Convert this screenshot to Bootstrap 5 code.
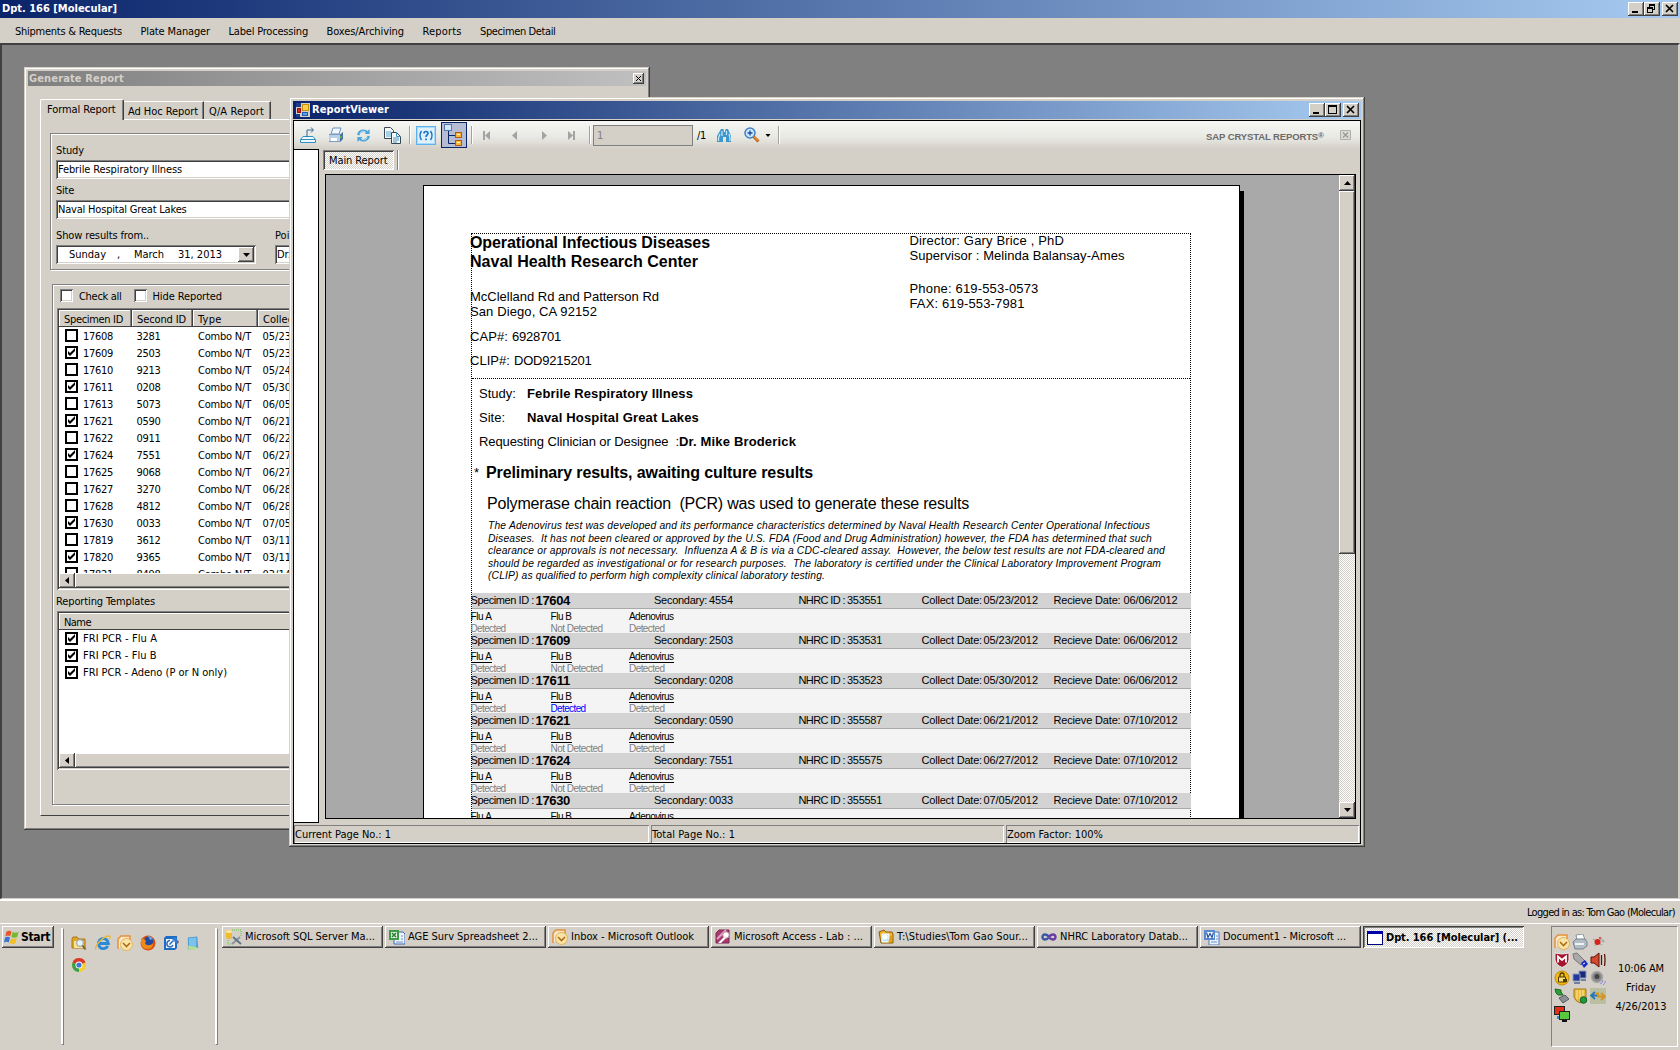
<!DOCTYPE html>
<html lang="en">
<head>
<meta charset="utf-8">
<title>Dpt. 166 [Molecular]</title>
<link href="https://cdn.jsdelivr.net/npm/bootstrap@5.3.0/dist/css/bootstrap.min.css" rel="stylesheet">
<style>
:root{--face:#d4d0c8;--dk:#404040;--sh:#808080}
*{border-radius:0}
body{width:1680px;height:1050px;overflow:hidden;background:var(--face);color:#000;font:11px/16px "DejaVu Sans Condensed","DejaVu Sans",sans-serif;font-stretch:condensed}
[data-w]{display:inline-block;white-space:pre;flex:none}
svg{display:block;flex:none;overflow:visible}
.raised{background:var(--face);box-shadow:inset -1px -1px var(--dk),inset 1px 1px #fff,inset -2px -2px var(--sh)}
.sunk{background:#fff;box-shadow:inset 1px 1px var(--sh),inset -1px -1px #fff,inset 2px 2px var(--dk),inset -2px -2px var(--face)}
.frame-win{background:var(--face);padding:4px;box-shadow:inset -1px -1px var(--dk),inset 1px 1px var(--face),inset -2px -2px var(--sh),inset 2px 2px #fff}
.dither{background:repeating-conic-gradient(#fff 0 25%,#d4d0c8 0 50%) 0 0/2px 2px}
.caption-bar{background:linear-gradient(90deg,#0a246a,#a6caf0);color:#fff;font-weight:700;height:18px;line-height:18px}
.capbtn{width:16px;height:14px}
.main-menu{height:25px;padding:2px 0 0 15px;gap:18.500px}
.mdi{height:856px;background:#808080;border-style:solid;border-width:2px 2px 1px 2px;border-color:#404040 var(--face) var(--face) #404040}
.gen-win{left:22px;top:22px;width:626px;height:763px}
.gen-cap{height:15px;background:linear-gradient(90deg,#808080,#c0c0c0);color:var(--face)}
.tabstrip{height:20px;margin:13px 0 0 12px}
.sheet-tab{height:18px;border-top:1px solid #fff;border-right:1px solid var(--dk);box-shadow:inset -1px 0 var(--sh);padding-left:4px;line-height:20px}
.sheet-tab.on{height:21px;border-left:1px solid #fff;border-radius:2px 2px 0 0;background:var(--face);padding-left:6px;line-height:20px;z-index:1}
.pane{margin-left:12px;width:597px;height:697px;border:1px solid;border-color:#fff var(--dk) var(--dk) #fff;padding:13px 9px}
.group{border:1px solid var(--sh);box-shadow:1px 1px #fff,inset 1px 1px #fff}
.g1{height:137px;padding:8px 5px 0}
.g2{height:521px;margin:14px 0 0 2px;padding:4px 4px 0}
.lab{height:16px;line-height:18px}
.field{height:19px;padding-left:2px;line-height:19px}
.cbx{width:13px;height:13px}
.listcbx{width:13px;height:13px;border:2px solid #000;background:#fff;flex:none}
.lv{padding:2px}
.lvhead{height:17px;background:var(--face);border-bottom:1px solid var(--dk)}
.lvhead div{height:16px;line-height:19px;padding-left:5px;box-shadow:inset -1px 0 var(--dk),inset -2px 0 var(--sh),inset 1px 1px #fff}
.lvrows{overflow:hidden}
.lvrow{height:17px;line-height:17px;padding-left:6px}
#specimens .lvrow>span{padding-top:1.500px}
.hs{height:15px;background:var(--face)}
.rv-win{left:287px;top:52px;width:1076px;height:750px}
.rv-body{height:724px;margin-top:1px;border:1px solid #000}
.rv-tools{height:28px;background:linear-gradient(#f6f6f4,#e8e8e3 60%,#d4d0c8)}
.rv-tools .sep{width:2px;height:18px;background:linear-gradient(90deg,#a5a29a 50%,#fff 50%)}
.treebtn{width:26px;height:26px;border:1px solid #0a246a;background:#b6bdd2}
.sap{font:700 9px/16px "Liberation Sans",sans-serif;color:#6b6b6b}
.rv-left{width:25px;height:674px;background:#fff;border:1px solid #000;border-left:0}
.rv-tab{width:71px;height:20px;box-shadow:inset 1px 1px var(--sh),inset -1px -1px #fff,inset 2px 2px var(--dk);line-height:22px;padding-left:6px}
.rv-area{width:1031px;height:645px;border:1px solid #000;background:#a9a9a9;margin-left:6px;overflow:hidden}
.paper{width:817px;height:900px;margin:10px 0 0 97px;border:1px solid #000;background:#fff;box-shadow:4px 6px #000;padding:47px 0 0 47px;font-family:"Liberation Sans",sans-serif;font-stretch:normal}
.repbox{width:720px;height:840px;border:1px dotted #000}
.sec1{height:144px}
.tl{margin-left:-2px;font-size:13px;line-height:15px;height:15px}
.tb{font-size:16px;font-weight:700}
.fine{font-size:10.3px;font-style:italic;line-height:12.6px;height:12.6px}
.band{display:grid;grid-template-columns:65px 118.5px 55px 89.5px 48.5px 74.5px 62px 70px 70px 60px;width:719px;height:16px;background:#d3d3d3;border-bottom:1px solid #a9a9a9;font-size:11px;line-height:15px}
.band>span,.res>span{margin-left:-1.500px}
.res{display:grid;grid-template-columns:80px 78.5px 100px;grid-template-rows:12px 11px;width:718px;height:24px;background:#f4f4f4;font-size:10px;line-height:12px;padding-top:2px}
.res .nm{height:11px;line-height:12px}
.ul .nm>span{border-bottom:1px solid #000;height:12px}
.rv-vs{width:16px}
.pnl{height:18px;box-shadow:inset 1px 1px var(--sh),inset -1px -1px #fff;line-height:19px;padding-left:1px}
.statusline{height:24px;border-top:2px solid #fff;line-height:24px;padding-right:5px}
.taskbar-xp{height:127px;border-top:1px solid #fff;padding-top:2px}
.tbtn{width:161px;height:22px;line-height:22px;padding-left:4px}
.tbtn.on{padding-top:2px;box-shadow:inset 1px 1px #404040,inset -1px -1px #fff,inset 2px 2px #808080}
.vsep{width:3px;height:117px;margin-top:2px;border:1px solid;border-color:#fff #808080 #808080 #fff;background:#fff}
.tray{width:127px;height:121px;border:1px solid;border-color:#808080 #fff #fff #808080}
.trayicons{display:grid;grid-template-columns:18px 18px 16px;grid-auto-rows:18px}
.ql{display:grid;grid-template-columns:24px 22px 23px 23px 23px 20px;grid-auto-rows:22px}
</style>
</head>
<body class="d-flex flex-column">
<svg width="0" height="0" class="position-absolute">
<defs>
<symbol id="i-folder" viewBox="0 0 16 16"><path d="M1 4l1-2h4l2 2h6v9H1z" fill="#e2a526" stroke="#a87a18"/><path d="M3 6h10v7H3z" fill="#fbe28e"/><circle cx="9" cy="8" r="3.4" fill="#e4f3fb" stroke="#8b9aa6"/><path d="M11.5 10.5l3 4" stroke="#7a6438" stroke-width="2"/></symbol>
<symbol id="i-folder2" viewBox="0 0 16 16"><path d="M1 3l5-2 2 2h6l1 2v9H3z" fill="#f0b429" stroke="#8a5c08"/><path d="M4 5h7v8H4z" fill="#bfe9fb" stroke="#fff"/><circle cx="7" cy="8" r="2.5" fill="#fff"/><path d="M12 7l3 0-2 7-3 0z" fill="#d9960c" opacity=".7"/></symbol>
<symbol id="i-ie" viewBox="0 0 16 16"><path d="M12.8 11A5 5 0 1 1 13.4 8.500H5" fill="none" stroke="#2a8ad8" stroke-width="2.9"/><path d="M1 14.500C-1 11 8 1 14.500 1c1 .5 .5 2-.3 3" fill="none" stroke="#e9b93a" stroke-width="1.500"/></symbol>
<symbol id="i-outlook" viewBox="0 0 16 16"><path d="M1 14V4l3-3h9v4" fill="#fbe6c8" stroke="#e5913a" stroke-width="1.500"/><circle cx="9.500" cy="9.500" r="6" fill="#fbe3a6" stroke="#e0b25a"/><path d="M6 8l3.500 3.500L13 8" fill="none" stroke="#a9701c" stroke-width="1.600"/></symbol>
<symbol id="i-ff" viewBox="0 0 16 16"><circle cx="8" cy="8" r="7.500" fill="#d9500f"/><circle cx="8.500" cy="6.500" r="4.800" fill="#234a9e"/><path d="M8 1c2 0 4 1 5 3l-3 1z" fill="#5fa6e0"/><path d="M1 3c1 1 2 1 3 1l2 2-1 2c1 3 6 3 8 0 0 5-3 6-6 6-4 0-6-4-6-6z" fill="#ef8a1b"/></symbol>
<symbol id="i-sync" viewBox="0 0 16 16"><path d="M1 3l2-2h11v12l-2 2H1z" fill="#1f6cc4"/><path d="M3 4h9v9H3z" fill="#f2f9ff"/><path d="M7 5.500A3.200 3.200 0 1 0 10 10M6.500 9.500l4-4" fill="none" stroke="#2c6cb8" stroke-width="1.500"/><path d="M9 4l3-2 4 5-2 2z" fill="#2f7fd6"/><path d="M14 5l2 2-2 2z" fill="#c2502a"/></symbol>
<symbol id="i-note" viewBox="0 0 16 16"><path d="M2 2l10-1 1 12-11 2z" fill="#4c9bd4"/><path d="M3 3l8-1v10H3z" fill="#7cc3ea"/><path d="M2 11l8 1 4 2-11 2z" fill="#b8dd96"/></symbol>
<symbol id="i-chrome" viewBox="0 0 16 16"><circle cx="8" cy="8" r="7" fill="#f7cf2d"/><path d="M8 8L1.500 5.500A7 7 0 0 1 14.500 5.500z" fill="#d93a2b"/><path d="M8 8L1.500 5.500A7 7 0 0 0 8 15z" fill="#38a14a"/><circle cx="8" cy="8" r="3.500" fill="#fff"/><circle cx="8" cy="8" r="2.600" fill="#3f78d0"/></symbol>
<symbol id="i-sql" viewBox="0 0 16 16"><path d="M6 1h9v7M2 11v4h4" fill="none" stroke="#66c24a" stroke-dasharray="1 1"/><rect x="0" y="1" width="6" height="9" rx="2" fill="#eebb33"/><ellipse cx="3" cy="2.500" rx="3" ry="1.500" fill="#fbe79a"/><path d="M6 15l8-7" stroke="#8a949f" stroke-width="2"/><path d="M7 8l8 7" stroke="#5b7288" stroke-width="1.800"/></symbol>
<symbol id="i-xl" viewBox="0 0 16 16"><path d="M5 3h9l2 2v10H5z" fill="#eef5fb" stroke="#3f67b0"/><rect x="0" y="1" width="10" height="10" fill="#3d9a45"/><rect x="2" y="3" width="6" height="6" fill="#e9f5e6"/><path d="M3 4l4 4M7 4L3 8" stroke="#2a7d34" stroke-width="1.500"/><path d="M7 13h7M12 7h2M12 10h2" stroke="#6d8fca"/></symbol>
<symbol id="i-acc" viewBox="0 0 16 16"><path d="M1 14V4l3-3h10v13z" fill="#a8396d" stroke="#7c2550"/><path d="M2 10l9-9" stroke="#e2a6c2" stroke-width="2"/><circle cx="11" cy="6" r="3.300" fill="#fff" stroke="#b77f9c"/><path d="M9 8l-6 6h3l5-5z" fill="#fff"/></symbol>
<symbol id="i-vs" viewBox="0 0 16 16"><path d="M8 8C6 5 1.500 4.500 1.500 8S6 11 8 8" fill="none" stroke="#3b56a8" stroke-width="2.400"/><path d="M8 8c2-3 6.500-3.500 6.500 0S10 11 8 8" fill="none" stroke="#6a3ba0" stroke-width="2.400"/></symbol>
<symbol id="i-word" viewBox="0 0 16 16"><path d="M5 3h10v13H5z" fill="#eaf2fc" stroke="#4d79c4"/><rect x="0" y="1" width="11" height="10" fill="#5c8ad2"/><rect x="2" y="3" width="8" height="6" fill="#f2f7fd"/><path d="M2.500 3.500l1.500 5L6 4.500 8 8.500 9.500 3.500" fill="none" stroke="#24509c" stroke-width="1.200"/><path d="M7 13h6M12 7h2M12 10h2" stroke="#6d8fca"/></symbol>
<symbol id="i-win" viewBox="0 0 16 14"><rect x=".5" y=".5" width="15" height="13" fill="#fff" stroke="#00007c"/><path d="M0 1.500h16" stroke="#0000a8" stroke-width="3"/></symbol>
<symbol id="i-flag" viewBox="0 0 16 16"><path d="M2.500 2.500c2-1.200 3.600-1 5 0L6.300 7.300c-1.500-1-3-1-5 0z" fill="#e8542b"/><path d="M8.600 3c2 1 3.700 1 6-.2L13.200 8c-2 1-4 1-5.800 0z" fill="#74b82c"/><path d="M1 8.500c2-1 3.500-1 5 0L4.800 13.500c-1.500-1-3-1-4.800 0z" fill="#3b74d8"/><path d="M7 9.200c2 1 3.800 1 5.800 0l-1.300 5c-2 1-3.800 1-5.800 0z" fill="#f4bf23"/></symbol>
<symbol id="i-form" viewBox="0 0 14 14"><rect width="14" height="14" fill="#d4d0c8"/><path d="M0 0h5v4H0zM0 11h4v3H0z" fill="#1c3c8c"/><rect x="1.500" y="5.500" width="3" height="4" fill="#d22" stroke="#911"/><rect x="6.500" y="1.500" width="6" height="6" fill="#fbd04a" stroke="#c8920f"/><rect x="6.500" y="9.500" width="5" height="3" fill="#5aa0ea" stroke="#1d5cae"/></symbol>
<symbol id="i-export" viewBox="0 0 16 16"><path d="M3 9.500h10l2.500 3v3h-15v-3z" fill="#eef8fd" stroke="#2d8fc4"/><path d="M1 12.500h14" stroke="#2d8fc4"/><path d="M7 10V3h6M11 .5L13.500 3 11 5.500" fill="none" stroke="#33698c"/></symbol>
<symbol id="i-print" viewBox="0 0 16 16"><path d="M5 1h8l-2 6H3z" fill="#f2f8fd" stroke="#6795bd"/><path d="M1 7h12l2-2v6l-3 4H1z" fill="#7d9cbf"/><path d="M1 8h11v6H1z" fill="#b9d0e6"/><path d="M3 11h6v3H3z" fill="#fff"/><path d="M12 8l3-3v7l-3 3z" fill="#48719d"/><path d="M12 9h2v2h-2z" fill="#53b447"/></symbol>
<symbol id="i-refresh" viewBox="0 0 16 16"><path d="M2.500 7.500A5.500 5 0 0 1 12 4.500M13.500 8.500A5.500 5 0 0 1 4 11.500" fill="none" stroke="#4aa5d8" stroke-width="2.600"/><path d="M9 6.500h5.500V1zM7 9.500H1.500V15z" fill="#4aa5d8"/><path d="M4 6a4.500 4 0 0 1 6-2M12 10a4.500 4 0 0 1-6 2" fill="none" stroke="#bfe4f5"/></symbol>
<symbol id="i-copy" viewBox="0 0 17 17"><path d="M.5.5h6l3 3v8h-9z" fill="#f3f8fb" stroke="#3a4650"/><path d="M2 5h5M2 7h5M2 9h5" stroke="#58a7d0"/><path d="M7.500 5.500h5l4 4v7h-9z" fill="#f3f8fb" stroke="#3a4650"/><path d="M12.500 5.500v4h4M9 11h6M9 13h6M9 15h4" fill="none" stroke="#4a93bd"/></symbol>
<symbol id="i-help" viewBox="0 0 20 19"><rect x=".5" y=".5" width="19" height="18" fill="#dff1fd" stroke="#5db2ee"/><rect x="1.500" y="1.500" width="17" height="16" fill="none" stroke="#a9dafa"/><path d="M5.500 5q-3 4.500 0 9M14.500 5q3 4.500 0 9" fill="none" stroke="#1c74c8" stroke-width="1.500"/><path d="M8 7.500q0-2 2-2t2 1.800q0 1-1 1.700-1 .7-1 2" fill="none" stroke="#1c74c8" stroke-width="1.700"/><path d="M9.200 12.500h1.700v1.700H9.200z" fill="#1c74c8"/></symbol>
<symbol id="i-tree" viewBox="0 0 22 22"><path d="M5.500 7v12.500h7M5.500 11.500h7" fill="none" stroke="#0a246a"/><rect x="1.500" y=".5" width="7" height="6" fill="#d5e8fb" stroke="#5577b0"/><rect x="12.500" y="8.500" width="6" height="5" fill="#f8b63a" stroke="#b05a10"/><rect x="12.500" y="16.500" width="6" height="5" fill="#f8b63a" stroke="#b05a10"/><path d="M14 10.500h3M14 18.500h3" stroke="#fff3c8"/></symbol>
<symbol id="i-bino" viewBox="0 0 15 13"><path d="M4 0h2.500l.5 3h1l.500-3H11l3 7v6H9V8H6v5H0V7z" fill="#3f97cf"/><path d="M3 5L1.500 9v3M5 2v5M12 5l1 4v3M9.500 2v4" fill="none" stroke="#c8e9f8" stroke-width="1.200"/></symbol>
<symbol id="i-mag" viewBox="0 0 16 16"><circle cx="6" cy="6" r="5" fill="#cfe8fb" stroke="#3d80cc" stroke-width="1.500"/><path d="M6 3.500v5M3.500 6h5" stroke="#1c4da0" stroke-width="1.400"/><path d="M9.500 9.500l5 5" stroke="#c4661a" stroke-width="3"/><path d="M10 9.500l4 4" stroke="#f8b55a"/></symbol>
<symbol id="i-check" viewBox="0 0 9 9"><path d="M1 3v3l2 2 5-5V0L3 5z" fill="#000"/></symbol>
<symbol id="i-tprint" viewBox="0 0 16 16"><path d="M4 1l7-1 2 6H5z" fill="#fff" stroke="#8a95a0"/><path d="M1 8l3-3h9l2 3v4l-4 3H3z" fill="#b4bdc6" stroke="#77818b"/><path d="M3 10h9" stroke="#eef2f5" stroke-width="2"/></symbol>
<symbol id="i-red" viewBox="0 0 16 16"><path d="M3 5l9 6M12 4L5 12" stroke="#999" stroke-width="1"/><circle cx="7.500" cy="8" r="3" fill="#d8241c"/><circle cx="13" cy="7" r="1.500" fill="#aaa"/><circle cx="10" cy="4" r="1.300" fill="#c66"/></symbol>
<symbol id="i-mc" viewBox="0 0 16 16"><path d="M1 1q7 2 14 0v7q-1 5-7 7.500Q2 13 1 8z" fill="#a8142c" stroke="#e8e8e8"/><path d="M4 10.500V4.500l4 3.500 4-3.500v6" fill="none" stroke="#fff" stroke-width="1.800"/></symbol>
<symbol id="i-usb" viewBox="0 0 16 16"><path d="M1 2l4-1 8 8-4 4-7-6z" fill="#a9a9a9" stroke="#777"/><path d="M9 11l4-3 3 4-4 4z" fill="#1a28c8"/><path d="M11 12l2-1" stroke="#fff"/></symbol>
<symbol id="i-spk" viewBox="0 0 16 16"><path d="M1 5h3l5-4v14l-5-4H1z" fill="#d44a2c" stroke="#5c1408"/><path d="M11.500 3v10M14.500 2q1 6 0 12" fill="none" stroke="#5c1408" stroke-width="1.300"/></symbol>
<symbol id="i-lock" viewBox="0 0 16 16"><circle cx="8" cy="8" r="7" fill="#f2b90f" stroke="#c48a08"/><path d="M6 7V5q0-2 2-2t2 2v2" fill="none" stroke="#4c3a08" stroke-width="1.300"/><path d="M4.500 7h7v5h-7z" fill="#f8e07a" stroke="#4c3a08"/><path d="M9 9h4v3H9z" fill="#4c3a08"/></symbol>
<symbol id="i-net" viewBox="0 0 16 16"><path d="M7 1h7v7H7z" fill="#1b2a78" stroke="#8d99bd"/><path d="M1 4h7v7H1z" fill="#22389a" stroke="#8d99bd"/><path d="M2 13h6M9 10h5" stroke="#75809a" stroke-width="2"/></symbol>
<symbol id="i-vol" viewBox="0 0 16 16"><circle cx="7" cy="7" r="5.500" fill="#888" stroke="#aaa" stroke-width="1.500"/><circle cx="7" cy="6.500" r="2.500" fill="#444"/><path d="M10 14q3-1 3-4M13 15q2-1 2.500-4" fill="none" stroke="#8a8ad8"/></symbol>
<symbol id="i-eject" viewBox="0 0 16 16"><path d="M5 10l6-3 4 4-6 4z" fill="#8b9096" stroke="#555b60"/><path d="M1 1l6 1v2l2 3H4L2 5z" fill="#2f9e3a" stroke="#186a22"/></symbol>
<symbol id="i-shield" viewBox="0 0 16 16"><path d="M2 1h12v8q-1 4-6 6-5-2-6-6z" fill="#e9b83a" stroke="#a9791a"/><path d="M5 2v9M8 2v11M11 2v8" stroke="#fbeaa8"/><circle cx="11.500" cy="12" r="3.300" fill="#1f9a3c" stroke="#0f5c22"/></symbol>
<symbol id="i-arrows" viewBox="0 0 16 16"><rect width="16" height="16" fill="#b9bfa0"/><path d="M5 4L1 7.500 5 11M1 7.500h7" fill="none" stroke="#2178b8" stroke-width="1.800"/><path d="M11 5l4 3.500-4 3.500M15 8.500H8V5.500H6" fill="none" stroke="#d9931a" stroke-width="1.800"/></symbol>
<symbol id="i-mon" viewBox="0 0 16 16"><rect x=".5" y=".5" width="10" height="8" fill="#e0301c" stroke="#222"/><path d="M3 10h4v3H3z" fill="#3a8ad0"/><rect x="5.500" y="5.500" width="10" height="8" fill="#58c93c" stroke="#222"/><path d="M8 15h5" stroke="#111" stroke-width="2"/></symbol>
<symbol id="i-left" viewBox="0 0 4 7"><path d="M4 0v7L0 3.500z"/></symbol>
<symbol id="i-up" viewBox="0 0 7 4"><path d="M0 4h7L3.500 0z"/></symbol>
<symbol id="i-down" viewBox="0 0 7 4"><path d="M0 0h7L3.500 4z"/></symbol>
<symbol id="b-min" viewBox="0 0 16 14"><path d="M4 9h6v2H4z"/></symbol>
<symbol id="b-max" viewBox="0 0 16 14"><path d="M3 2h9v9H3zM4 4v6h7V4z" fill-rule="evenodd"/></symbol>
<symbol id="b-res" viewBox="0 0 16 14"><path d="M5 2h6v6H9v3H3V5h2zM6 4v1h3v2h1V4zM4 7v3h4V7z" fill-rule="evenodd"/></symbol>
<symbol id="b-x" viewBox="0 0 16 14"><path d="M4 3l7 7M11 3l-7 7" stroke="#000" stroke-width="1.700"/></symbol>
</defs>
</svg>

<header>
  <div class="caption-bar d-flex align-items-center justify-content-between">
    <span style="margin-left:2px" data-w="115">Dpt. 166 [Molecular]</span>
    <div class="d-flex" style="margin-right:2px">
      <svg class="capbtn raised"><use href="#b-min"/></svg><svg class="capbtn raised"><use href="#b-res"/></svg><svg class="capbtn raised" style="margin-left:2px"><use href="#b-x"/></svg>
    </div>
  </div>
  <nav class="main-menu d-flex align-items-center">
    <span data-w="107">Shipments &amp; Requests</span><span data-w="69.500">Plate Manager</span><span data-w="79.500">Label Processing</span><span data-w="77.500">Boxes/Archiving</span><span data-w="39">Reports</span><span data-w="75.500">Specimen Detail</span>
  </nav>
</header>

<main class="mdi position-relative overflow-hidden">
  <section class="gen-win frame-win position-absolute">
    <div class="gen-cap d-flex align-items-center justify-content-between fw-bold">
      <span style="margin:1px 0 0 1px" data-w="95">Generate Report</span>
      <svg class="raised" width="11" height="11" style="margin-right:2px"><path d="M3 3l5 5M8 3L3 8" stroke="#000"/></svg>
    </div>
    <div class="tabstrip d-flex align-items-end">
      <div class="sheet-tab on position-relative" style="width:84px;margin-bottom:-1px"><span data-w="68.500">Formal Report</span></div>
      <div class="sheet-tab" style="width:80px"><span data-w="70">Ad Hoc Report</span></div>
      <div class="sheet-tab" style="width:67px;padding-left:5px"><span data-w="55">Q/A Report</span></div>
    </div>
    <div class="pane">
      <div class="group g1">
        <div class="lab"><span data-w="28">Study</span></div>
        <div class="field sunk" style="margin-top:2px"><span data-w="124">Febrile Respiratory Illness</span></div>
        <div class="lab" style="margin-top:3px"><span data-w="18">Site</span></div>
        <div class="field sunk" style="margin-top:2px"><span data-w="128.500">Naval Hospital Great Lakes</span></div>
        <div class="lab d-flex" style="margin-top:8px"><span style="margin-right:126px" data-w="93">Show results from..</span><span>Point of Contact</span></div>
        <div class="d-flex" style="margin-top:2px">
          <div class="field sunk d-flex" style="width:200px;padding-left:13px"><span style="width:48px"><span data-w="37">Sunday</span></span><span style="width:17px">,</span><span style="width:44px"><span data-w="30">March</span></span><span data-w="44">31, 2013</span>
            <div class="raised ms-auto d-flex align-items-center justify-content-center" style="width:16px;height:15px;margin:2px 2px 0 0"><svg width="7" height="4"><use href="#i-down"/></svg></div></div>
          <div class="field sunk flex-fill" style="margin-left:19px">Dr. Mike Broderick</div>
        </div>
      </div>
      <div class="group g2">
        <div class="d-flex align-items-center" style="height:13px;padding-left:3px">
          <div class="cbx sunk"></div><span style="margin:3px 12px 0 6px" data-w="42.500">Check all</span>
          <div class="cbx sunk"></div><span style="margin:3px 0 0 6px" data-w="69.500">Hide Reported</span>
        </div>
        <div class="lv sunk" style="margin-top:6px;height:282px">
          <div class="lvhead d-flex"><div style="width:73px"><span data-w="59">Specimen ID</span></div><div style="width:61px"><span data-w="49">Second ID</span></div><div style="width:65px"><span data-w="23.500">Type</span></div><div class="flex-fill"><span data-w="61">Collect Date</span></div></div>
          <div class="lvrows" id="specimens" style="height:246px"></div>
          <div class="hs d-flex"><div class="raised d-flex align-items-center justify-content-center" style="width:16px"><svg width="4" height="7"><use href="#i-left"/></svg></div><div class="raised" style="width:400px"></div></div>
        </div>
        <div class="lab" style="margin:3px 0 0 -1px"><span data-w="99">Reporting Templates</span></div>
        <div class="lv sunk" style="margin-top:2px;height:159px">
          <div class="lvhead"><div><span data-w="27">Name</span></div></div>
          <div class="lvrows" id="templates" style="height:123px"></div>
          <div class="hs d-flex"><div class="raised d-flex align-items-center justify-content-center" style="width:16px"><svg width="4" height="7"><use href="#i-left"/></svg></div><div class="raised" style="width:400px"></div></div>
        </div>
      </div>
    </div>
  </section>

  <section class="rv-win frame-win position-absolute">
    <div class="caption-bar d-flex align-items-center">
      <svg width="14" height="14" style="margin:0 2px 0 3px"><use href="#i-form"/></svg><span data-w="77">ReportViewer</span>
      <div class="d-flex ms-auto" style="margin-right:2px"><svg class="capbtn raised"><use href="#b-min"/></svg><svg class="capbtn raised"><use href="#b-max"/></svg><svg class="capbtn raised" style="margin-left:2px"><use href="#b-x"/></svg></div>
    </div>
    <div class="rv-body d-flex flex-column">
      <div class="rv-tools d-flex align-items-center" style="padding-left:6px">
        <svg width="16" height="16"><use href="#i-export"/></svg>
        <svg width="16" height="16" style="margin-left:12px"><use href="#i-print"/></svg>
        <svg width="15" height="15" style="margin-left:12px"><use href="#i-refresh"/></svg>
        <svg width="17" height="17" style="margin-left:13px"><use href="#i-copy"/></svg>
        <div class="sep" style="margin-left:8px"></div>
        <svg width="20" height="19" style="margin-left:5px"><use href="#i-help"/></svg>
        <div class="treebtn" style="margin-left:5px"><svg width="22" height="22" style="margin:1px"><use href="#i-tree"/></svg></div>
        <div class="sep" style="margin-left:4px"></div>
        <svg width="8" height="9" fill="#a3a3a3" style="margin-left:10px"><path d="M0 0h2v9H0zM7 0v9L2 4.500z"/></svg>
        <svg width="5" height="9" fill="#a3a3a3" style="margin-left:21px"><path d="M5 0v9L0 4.500z"/></svg>
        <svg width="5" height="9" fill="#a3a3a3" style="margin-left:25px"><path d="M0 0v9l5-4.500z"/></svg>
        <svg width="8" height="9" fill="#a3a3a3" style="margin-left:21px"><path d="M5 0h2v9H5zM0 0v9l5-4.500z"/></svg>
        <div class="sep" style="margin-left:13px"></div>
        <div style="margin-left:2px;width:100px;height:21px;border:1px solid #808080;background:#d4d0c8;color:#808080;padding-left:3px;line-height:19px">1</div>
        <span style="margin:1px 0 0 4px" data-w="9">/1</span>
        <svg width="15" height="13" style="margin-left:11px"><use href="#i-bino"/></svg>
        <svg width="16" height="16" style="margin-left:12px"><use href="#i-mag"/></svg>
        <svg width="6" height="3" style="margin-left:5px" viewBox="0 0 7 4"><use href="#i-down" width="7" height="4"/></svg>
        <div class="sep" style="margin-left:7px"></div>
        <span class="sap ms-auto d-flex" style="margin-top:4px"><span style="font-size:9.500px" data-w="112">SAP CRYSTAL REPORTS</span><span style="font-size:8px;line-height:14px">®</span></span>
        <svg width="11" height="10" style="margin:0 9px 0 16px"><path d="M.5.5h10v9H.5z" fill="#dcdad4" stroke="#b0aea8"/><path d="M3 2.500l5 5M8 2.500l-5 5" stroke="#999" stroke-width="1.300"/></svg>
      </div>
      <div class="d-flex" style="height:676px">
        <div class="rv-left"></div>
        <div>
          <div class="d-flex" style="height:25px;padding:1px 0 0 4px"><div class="rv-tab dither"><span data-w="58.500">Main Report</span></div><div style="width:2px;height:20px;margin-left:3px;background:linear-gradient(90deg,#808080 50%,#fff 50%)"></div></div>
          <div class="rv-area d-flex justify-content-between">
            <div class="paper flex-shrink-0">
              <div class="repbox">
                <div class="sec1 d-flex">
                  <div style="width:439.500px">
                    <div class="tl tb" style="height:18px;line-height:18px"><span data-w="240">Operational Infectious Diseases</span></div>
                    <div class="tl tb" style="height:19px;line-height:19px"><span data-w="228">Naval Health Research Center</span></div>
                    <div class="tl" style="margin-top:18px"><span data-w="189">McClelland Rd and Patterson Rd</span></div>
                    <div class="tl"><span data-w="127">San Diego, CA 92152</span></div>
                    <div class="tl d-flex" style="margin-top:10px"><span style="margin-right:4px" data-w="38">CAP#:</span><span data-w="49">6928701</span></div>
                    <div class="tl d-flex" style="margin-top:9px"><span style="margin-right:4px" data-w="40">CLIP#:</span><span data-w="77.500">DOD9215201</span></div>
                  </div>
                  <div>
                    <div class="tl" style="height:14px;line-height:13px"><span data-w="154.500">Director: Gary Brice , PhD</span></div>
                    <div class="tl"><span data-w="215">Supervisor : Melinda Balansay-Ames</span></div>
                    <div class="tl" style="margin-top:18px"><span data-w="129">Phone: 619-553-0573</span></div>
                    <div class="tl" style="line-height:16px"><span data-w="115">FAX: 619-553-7981</span></div>
                  </div>
                </div>
                <div style="border-top:1px dotted #000;padding-left:7px">
                  <div class="tl d-flex" style="margin:7px 0 0 0"><span style="width:48px"><span data-w="37">Study:</span></span><b data-w="166">Febrile Respiratory Illness</b></div>
                  <div class="tl d-flex" style="margin:9px 0 0 0"><span style="width:48px"><span data-w="26">Site:</span></span><b data-w="172">Naval Hospital Great Lakes</b></div>
                  <div class="tl d-flex" style="margin:9px 0 0 0"><span data-w="200">Requesting Clinician or Designee  :</span><b data-w="117">Dr. Mike Broderick</b></div>
                  <div class="tl d-flex" style="margin:15px 0 0 -5px;height:18px;line-height:18px"><span style="width:12px">*</span><b class="tb" data-w="327">Preliminary results, awaiting culture results</b></div>
                  <div class="tl" style="margin:13px 0 0 8px;height:18px;line-height:18px;font-size:16px"><span data-w="482">Polymerase chain reaction  (PCR) was used to generate these results</span></div>
                  <div class="fine" style="margin:7px 0 0 9px;height:73px"><div><span data-w="662">The Adenovirus test was developed and its performance characteristics determined by Naval Health Research Center Operational Infectious</span></div><div><span data-w="664">Diseases.  It has not been cleared or approved by the U.S. FDA (Food and Drug Administration) however, the FDA has determined that such</span></div><div><span data-w="677">clearance or approvals is not necessary.  Influenza A &amp; B is via a CDC-cleared assay.  However, the below test results are not FDA-cleared and</span></div><div><span data-w="673">should be regarded as investigational or for research purposes.  The laboratory is certified under the Clinical Laboratory Improvement Program</span></div><div><span data-w="337">(CLIP) as qualified to perform high complexity clinical laboratory testing.</span></div></div>
                </div>
                <div id="results"></div>
              </div>
            </div>
            <div class="rv-vs dither d-flex flex-column flex-shrink-0">
              <div class="raised d-flex align-items-center justify-content-center" style="height:16px"><svg width="7" height="4"><use href="#i-up"/></svg></div>
              <div class="raised" style="height:363px"></div>
              <div class="raised d-flex align-items-center justify-content-center mt-auto" style="height:16px"><svg width="7" height="4"><use href="#i-down"/></svg></div>
            </div>
          </div>
        </div>
      </div>
      <div class="d-flex" style="gap:2px"><div class="pnl" style="width:355px"><span data-w="96">Current Page No.: 1</span></div><div class="pnl" style="width:353px"><span data-w="83">Total Page No.: 1</span></div><div class="pnl" style="width:353px"><span data-w="96">Zoom Factor: 100%</span></div></div>
    </div>
  </section>
</main>

<div class="statusline d-flex justify-content-end"><span data-w="148">Logged in as: Tom Gao (Molecular)</span></div>

<footer class="taskbar-xp d-flex align-items-start">
  <div class="raised d-flex align-items-center fw-bold" style="width:52px;height:22px;margin-left:2px;padding-left:2px;font-size:12px"><svg width="16" height="16" style="margin-right:1px"><use href="#i-flag"/></svg><span data-w="29">Start</span></div>
  <div class="vsep" style="margin-left:7px"></div>
  <div class="ql" style="width:151px;padding:9px 0 0 7px">
    <svg width="16" height="16"><use href="#i-folder"/></svg><svg width="16" height="16"><use href="#i-ie"/></svg><svg width="16" height="16"><use href="#i-outlook"/></svg><svg width="16" height="16"><use href="#i-ff"/></svg><svg width="16" height="16"><use href="#i-sync"/></svg><svg width="15" height="16"><use href="#i-note"/></svg><svg width="16" height="16"><use href="#i-chrome"/></svg>
  </div>
  <div class="vsep"></div>
  <div class="d-flex" style="gap:2px;margin-left:4px" id="tasks"></div>
  <div class="tray ms-auto d-flex" style="margin-right:2px">
    <div class="trayicons" style="padding:7px 0 0 2px;width:60px" id="tray"></div>
    <div class="text-center d-flex flex-column" style="width:58px;gap:3px;padding-top:34px"><div><span data-w="46">10:06 AM</span></div><div><span data-w="30">Friday</span></div><div><span data-w="51">4/26/2013</span></div></div>
  </div>
</footer>

<script src="https://cdn.jsdelivr.net/npm/bootstrap@5.3.0/dist/js/bootstrap.bundle.min.js"></script>
<script>
const byId = id => document.getElementById(id);
const box = on => `<div class="listcbx">${on ? '<svg width="9" height="9"><use href="#i-check"/></svg>' : ''}</div>`;
const cell = (w, t, tw) => `<span style="width:${w}px"><span data-w="${tw}">${t}</span></span>`;

byId('specimens').innerHTML = [
  ['17608','3281','05/23',0],['17609','2503','05/23',1],['17610','9213','05/24',0],['17611','0208','05/30',1],
  ['17613','5073','06/05',0],['17621','0590','06/21',1],['17622','0911','06/22',0],['17624','7551','06/27',1],
  ['17625','9068','06/27',0],['17627','3270','06/28',0],['17628','4812','06/28',0],['17630','0033','07/05',1],
  ['17819','3612','03/11',0],['17820','9365','03/11',1],['17821','8498','03/14',0]
].map(r => `<div class="lvrow d-flex align-items-center">${box(r[3])}<span style="width:5px"></span>${cell(53.5,r[0],30)}${cell(61.5,r[1],24)}${cell(64.5,'Combo N/T',53)}${cell(80,r[2]+'/2012',57)}</div>`).join('');

byId('templates').innerHTML = [['FRI PCR - Flu A',74],['FRI PCR - Flu B',73.5],['FRI PCR - Adeno (P or N only)',144]]
  .map(t => `<div class="lvrow d-flex align-items-center">${box(1)}<span style="width:5px"></span>${cell(200,t[0],t[1])}</div>`).join('');

byId('results').innerHTML = [
  ['17604','4554','353551','05/23/2012','06/06/2012'],['17609','2503','353531','05/23/2012','06/06/2012'],
  ['17611','0208','353523','05/30/2012','06/06/2012'],['17621','0590','355587','06/21/2012','07/10/2012'],
  ['17624','7551','355575','06/27/2012','07/10/2012'],['17630','0033','355551','07/05/2012','07/10/2012']
].map((r, i) => {
  const s = (w, t) => `<span><span data-w="${w}">${t}</span></span>`;
  const n = (w, t) => `<span class="nm"><span data-w="${w}">${t}</span></span>`;
  const hit = r[0] === '17611';
  return `<div class="band">${s(63.5,'Specimen ID :')}<span style="font-size:13px"><b data-w="34.5">${r[0]}</b></span>${s(53,'Secondary:')}${s(24,r[1])}${s(46.5,'NHRC ID :')}${s(35,r[2])}${s(60.5,'Collect Date:')}${s(54.5,r[3])}${s(67,'Recieve Date:')}${s(54,r[4])}</div>
  <div class="res ${i ? 'ul' : ''}">${n(21,'Flu A')}${n(21,'Flu B')}${n(44.5,'Adenovirus')}<span style="color:#808080">${s(35,'Detected')}</span><span style="color:${hit ? '#00f' : '#808080'}">${hit ? s(35,'Detected') : s(52,'Not Detected')}</span><span style="color:#808080">${s(35.5,'Detected')}</span></div>`;
}).join('');

byId('tasks').innerHTML = [
  ['sql','Microsoft SQL Server Ma...',130],['xl','AGE Surv Spreadsheet 2...',130],['outlook','Inbox - Microsoft Outlook',123],
  ['acc','Microsoft Access - Lab : ...',129],['folder2','T:\\Studies\\Tom Gao Sour...',131],['vs','NHRC Laboratory Datab...',128],
  ['word','Document1 - Microsoft ...',123],['win','Dpt. 166 [Molecular] (...',132]
].map((t, i) => `<div class="tbtn d-flex align-items-center ${i === 7 ? 'on dither fw-bold' : 'raised'}"><svg width="16" height="${i === 7 ? 14 : 16}" style="margin-right:3px"><use href="#i-${t[0]}"/></svg><span data-w="${t[2]}">${t[1]}</span></div>`).join('');

byId('tray').innerHTML = ['outlook','tprint','red','mc','usb','spk','lock','net','vol','eject','shield','arrows','mon']
  .map(n => `<svg width="16" height="16"><use href="#i-${n}"/></svg>`).join('');

/* Tracks each label to the column width set in data-w */
document.querySelectorAll('[data-w]').forEach(e => {
  const n = e.textContent.length, w = e.getBoundingClientRect().width;
  e.style.letterSpacing = ((+e.dataset.w - w) / n).toFixed(3) + 'px';
});
</script>
</body>
</html>
